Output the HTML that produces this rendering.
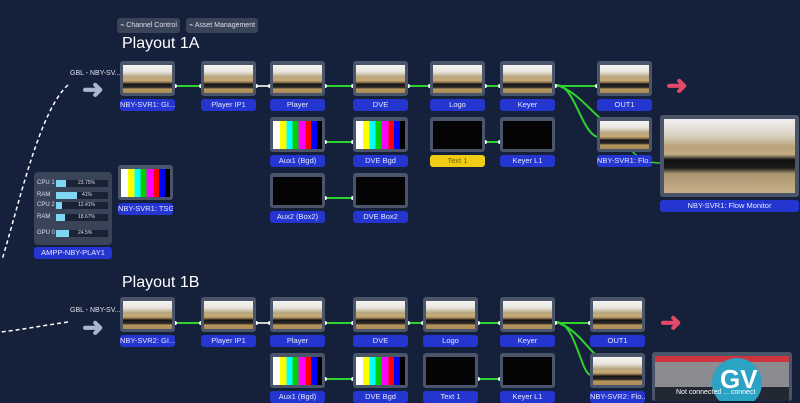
<!DOCTYPE html>
<html><head><style>
body{margin:0;width:800px;height:401px;overflow:hidden;background:#15203b;font-family:"Liberation Sans",sans-serif;position:relative}
.f{position:absolute;width:55px;height:35px;background:#4b5569;border-radius:3px}
.f i{position:absolute;left:3px;top:4px;right:3px;bottom:3px;display:block}
.v{background:linear-gradient(180deg,#f4f4f2 0%,#e6e4dc 25%,#b8a57e 42%,#c9ab78 55%,#8e7650 62%,#151515 68%,#2a2a2a 80%,#b9975f 86%,#a98a58 100%)}
.b{background:linear-gradient(90deg,#fff 0 14%,#ff0 14% 28%,#0ff 28% 40%,#0c0 40% 52%,#f0f 52% 66%,#f00 66% 78%,#00f 78% 90%,#000 90%)}
.k{background:#050508}
.l{position:absolute;width:55px;height:12px;background:#2435d0;border-radius:3px;color:#e6e9ff;font-size:7.5px;line-height:12px;text-align:center;white-space:nowrap;overflow:hidden}
.y{background:#f1cc14;color:#7a6400}
.t{position:absolute;color:#fff;font-size:16px}
.btn{position:absolute;top:18px;height:15px;background:#3a4459;border-radius:3px;color:#dde;font-size:7px;line-height:15px;text-align:center}
.ln{position:absolute;height:2px;background:#2fd12f}
.ln:before,.ln:after{content:"";position:absolute;top:-1px;width:4px;height:4px;border-radius:50%;background:#fff}
.ln:before{left:-2px}.ln:after{right:-2px}
.g{position:absolute;color:#dfe3ee;font-size:7px}
.a{position:absolute;font-size:26px;font-weight:bold;line-height:20px}
</style></head><body>
<div class="btn" style="left:117px;width:63px">⌁ Channel Control</div>
<div class="btn" style="left:186px;width:72px">⌁ Asset Management</div>
<div class="t" style="left:122px;top:35px">Playout 1A</div>
<div class="t" style="left:122px;top:274px">Playout 1B</div>
<div class="g" style="left:70px;top:70px">GBL - NBY-SV...</div>
<div class="g" style="left:70px;top:307px">GBL - NBY-SV...</div>
<div class="a" style="left:82px;top:79px;color:#aab5cf">➜</div>
<div class="a" style="left:82px;top:317px;color:#aab5cf">➜</div>
<div class="a" style="left:666px;top:75px;color:#e34a6a">➜</div>
<div class="a" style="left:660px;top:312px;color:#e34a6a">➜</div>
<svg style="position:absolute;left:0;top:0" width="800" height="401"><path d="M68 85 C40 110 20 200 2 260" stroke="#fff" stroke-width="1.5" stroke-dasharray="4 3" fill="none"/><path d="M68 322 C40 326 20 330 0 332" stroke="#fff" stroke-width="1.5" stroke-dasharray="4 3" fill="none"/>
<path d="M556 85 C575 85 580 130 597 137" stroke="#2fd12f" stroke-width="2" fill="none"/><path d="M556 85 C575 90 590 110 600 118" stroke="#2fd12f" stroke-width="2" fill="none"/><path d="M632 151 C640 160 650 163 660 163" stroke="#2fd12f" stroke-width="1.5" fill="none"/>
<path d="M556 322 C575 322 580 370 590 375" stroke="#2fd12f" stroke-width="2" fill="none"/><path d="M556 322 C575 328 585 345 596 355" stroke="#2fd12f" stroke-width="2" fill="none"/></svg>
<div class="ln" style="left:175px;top:85px;width:26px"></div><div class="ln" style="left:256px;top:85px;width:14px;background:#ccc"></div><div class="ln" style="left:325px;top:85px;width:28px"></div><div class="ln" style="left:408px;top:85px;width:22px"></div><div class="ln" style="left:485px;top:85px;width:15px"></div><div class="ln" style="left:555px;top:85px;width:42px"></div>
<div class="ln" style="left:325px;top:141px;width:28px"></div><div class="ln" style="left:485px;top:141px;width:15px"></div><div class="ln" style="left:325px;top:197px;width:28px"></div>
<div class="f" style="left:120px;top:61px"><i class="v"></i></div><div class="l" style="left:120px;top:99px">NBY-SVR1: GI...</div>
<div class="f" style="left:201px;top:61px"><i class="v"></i></div><div class="l" style="left:201px;top:99px">Player IP1</div>
<div class="f" style="left:270px;top:61px"><i class="v"></i></div><div class="l" style="left:270px;top:99px">Player</div>
<div class="f" style="left:353px;top:61px"><i class="v"></i></div><div class="l" style="left:353px;top:99px">DVE</div>
<div class="f" style="left:430px;top:61px"><i class="v"></i></div><div class="l" style="left:430px;top:99px">Logo</div>
<div class="f" style="left:500px;top:61px"><i class="v"></i></div><div class="l" style="left:500px;top:99px">Keyer</div>
<div class="f" style="left:597px;top:61px"><i class="v"></i></div><div class="l" style="left:597px;top:99px">OUT1</div>
<div class="f" style="left:270px;top:117px"><i class="b"></i></div><div class="l" style="left:270px;top:155px">Aux1 (Bgd)</div>
<div class="f" style="left:353px;top:117px"><i class="b"></i></div><div class="l" style="left:353px;top:155px">DVE Bgd</div>
<div class="f" style="left:430px;top:117px"><i class="k"></i></div><div class="l y" style="left:430px;top:155px">Text 1</div>
<div class="f" style="left:500px;top:117px"><i class="k"></i></div><div class="l" style="left:500px;top:155px">Keyer L1</div>
<div class="f" style="left:597px;top:117px"><i class="v"></i></div><div class="l" style="left:597px;top:155px">NBY-SVR1: Flo...</div>
<div class="f" style="left:270px;top:173px"><i class="k"></i></div><div class="l" style="left:270px;top:211px">Aux2 (Box2)</div>
<div class="f" style="left:353px;top:173px"><i class="k"></i></div><div class="l" style="left:353px;top:211px">DVE Box2</div>
<div class="f" style="left:118px;top:165px"><i class="b"></i></div><div class="l" style="left:118px;top:203px">NBY-SVR1: TSG</div>
<div style="position:absolute;left:660px;top:115px;width:139px;height:82px;background:#4b5569;border-radius:3px"><i style="position:absolute;left:4px;top:4px;right:4px;bottom:4px;display:block;background:linear-gradient(180deg,#f0f0f0 0%,#dcd6c8 20%,#b9a27a 38%,#c4ad86 48%,#111 55%,#1a1a1a 66%,#a99570 74%,#c8b08a 100%)"></i></div>
<div class="l" style="left:660px;top:200px;width:139px">NBY-SVR1: Flow Monitor</div>
<div style="position:absolute;left:34px;top:172px;width:78px;height:73px;background:#3a4459;border-radius:4px;font-size:6px;color:#dde">
<div style="position:absolute;left:3px;top:8px">CPU 1</div><div style="position:absolute;left:22px;top:8px;width:52px;height:7px;background:#1a2235"><span style="display:block;width:10px;height:7px;background:#7fd6f3"></span></div><div style="position:absolute;left:44px;top:8px;font-size:5px">23.75%</div>
<div style="position:absolute;left:3px;top:20px">RAM</div><div style="position:absolute;left:22px;top:20px;width:52px;height:7px;background:#1a2235"><span style="display:block;width:21px;height:7px;background:#7fd6f3"></span></div><div style="position:absolute;left:48px;top:20px;font-size:5px">41%</div>
<div style="position:absolute;left:3px;top:30px">CPU 2</div><div style="position:absolute;left:22px;top:30px;width:52px;height:7px;background:#1a2235"><span style="display:block;width:6px;height:7px;background:#7fd6f3"></span></div><div style="position:absolute;left:44px;top:30px;font-size:5px">12.41%</div>
<div style="position:absolute;left:3px;top:42px">RAM</div><div style="position:absolute;left:22px;top:42px;width:52px;height:7px;background:#1a2235"><span style="display:block;width:9px;height:7px;background:#7fd6f3"></span></div><div style="position:absolute;left:44px;top:42px;font-size:5px">18.67%</div>
<div style="position:absolute;left:3px;top:58px">GPU 0</div><div style="position:absolute;left:22px;top:58px;width:52px;height:7px;background:#1a2235"><span style="display:block;width:13px;height:7px;background:#7fd6f3"></span></div><div style="position:absolute;left:44px;top:58px;font-size:5px">24.5%</div>
</div>
<div class="l" style="left:34px;top:247px;width:78px">AMPP-NBY-PLAY1</div>
<div class="ln" style="left:175px;top:322px;width:26px"></div><div class="ln" style="left:256px;top:322px;width:14px;background:#ccc"></div><div class="ln" style="left:325px;top:322px;width:28px"></div><div class="ln" style="left:408px;top:322px;width:15px"></div><div class="ln" style="left:478px;top:322px;width:22px"></div><div class="ln" style="left:555px;top:322px;width:35px"></div>
<div class="ln" style="left:325px;top:378px;width:28px"></div><div class="ln" style="left:478px;top:378px;width:22px"></div>
<div class="f" style="left:120px;top:297px"><i class="v"></i></div><div class="l" style="left:120px;top:335px">NBY-SVR2: GI...</div>
<div class="f" style="left:201px;top:297px"><i class="v"></i></div><div class="l" style="left:201px;top:335px">Player IP1</div>
<div class="f" style="left:270px;top:297px"><i class="v"></i></div><div class="l" style="left:270px;top:335px">Player</div>
<div class="f" style="left:353px;top:297px"><i class="v"></i></div><div class="l" style="left:353px;top:335px">DVE</div>
<div class="f" style="left:423px;top:297px"><i class="v"></i></div><div class="l" style="left:423px;top:335px">Logo</div>
<div class="f" style="left:500px;top:297px"><i class="v"></i></div><div class="l" style="left:500px;top:335px">Keyer</div>
<div class="f" style="left:590px;top:297px"><i class="v"></i></div><div class="l" style="left:590px;top:335px">OUT1</div>
<div class="f" style="left:270px;top:353px"><i class="b"></i></div><div class="l" style="left:270px;top:391px">Aux1 (Bgd)</div>
<div class="f" style="left:353px;top:353px"><i class="b"></i></div><div class="l" style="left:353px;top:391px">DVE Bgd</div>
<div class="f" style="left:423px;top:353px"><i class="k"></i></div><div class="l" style="left:423px;top:391px">Text 1</div>
<div class="f" style="left:500px;top:353px"><i class="k"></i></div><div class="l" style="left:500px;top:391px">Keyer L1</div>
<div class="f" style="left:590px;top:353px"><i class="v"></i></div><div class="l" style="left:590px;top:391px">NBY-SVR2: Flo...</div>
<div style="position:absolute;left:652px;top:352px;width:140px;height:49px;background:#4b5569;border-radius:3px;overflow:hidden">
<div style="position:absolute;left:3px;top:4px;right:3px;height:6px;background:#d0343f"></div>
<div style="position:absolute;left:3px;top:10px;right:3px;height:25px;background:#8a8c90"></div>
<div style="position:absolute;left:3px;top:35px;right:3px;bottom:0;background:#222833"></div>
<div style="position:absolute;left:60px;top:6px;width:50px;height:50px;border-radius:50%;background:#2ba3c4"></div>
<div style="position:absolute;left:68px;top:12px;color:#fff;font-size:26px;font-weight:bold">GV</div>
<div style="position:absolute;left:24px;top:37px;color:#fff;font-size:7px">Not connected ... connect</div>
</div>
</body></html>
